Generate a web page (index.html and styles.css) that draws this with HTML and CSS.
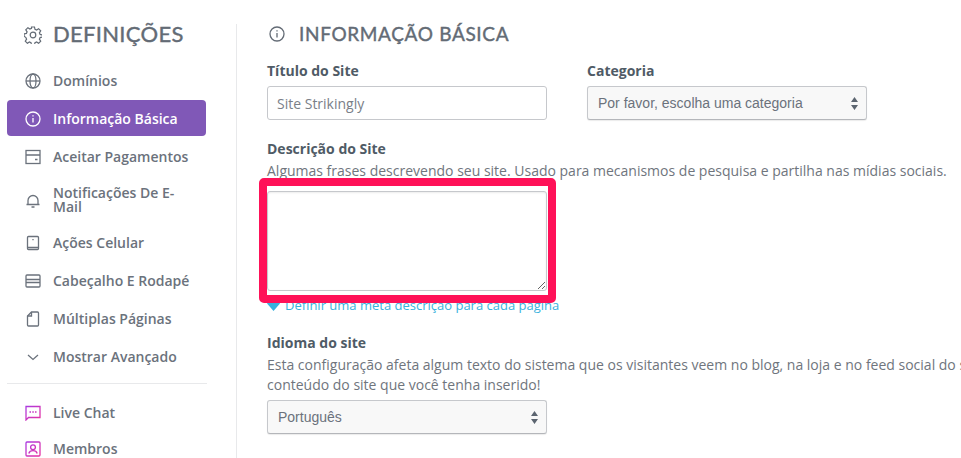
FILE: index.html
```html
<!DOCTYPE html>
<html lang="pt-br">
<head>
  <meta charset="UTF-8">
  <title>Definições</title>
  <link rel="stylesheet" href="styles.css">
</head>
<body>
  <div class="page">
    <aside class="sidebar">
      <h2 class="side-title">
        <svg class="icon title-icon" viewBox="0 0 18 18"><circle cx="9" cy="9" r="2.800"/><path d="M7.500 1h3l.5 2.300 1.600.7 2-1.300 2.100 2.100-1.300 2 .7 1.600 2.300.5v2.200l-2.300.5-.7 1.600 1.300 2-2.100 2.100-2-1.300-1.600.7-.5 2.300h-3l-.5-2.300-1.600-.7-2 1.300-2.100-2.100 1.300-2-.7-1.600L.1 10.100V7.900l2.300-.5.7-1.600-1.300-2 2.100-2.100 2 1.300 1.600-.7z"/></svg>
        DEFINIÇÕES
      </h2>
      <ul class="menu">
        <li class="menu-item">
          <svg class="icon" viewBox="0 0 16 16"><circle cx="8" cy="8" r="7"/><ellipse cx="8" cy="8" rx="3" ry="7"/><path d="M1 8h14"/></svg>
          <span>Domínios</span>
        </li>
        <li class="menu-item active">
          <svg class="icon" viewBox="0 0 16 16"><circle cx="8" cy="8" r="7"/><path d="M8 7v4.500M8 4.200v1.300"/></svg>
          <span>Informação Básica</span>
        </li>
        <li class="menu-item">
          <svg class="icon" viewBox="0 0 16 16"><rect x="1" y="1.500" width="14" height="13"/><path d="M1 6h14M10 10.500h2.500"/></svg>
          <span>Aceitar Pagamentos</span>
        </li>
        <li class="menu-item tall">
          <svg class="icon" viewBox="0 0 16 16"><path d="M1.500 12.500h13M3 12.500V8.500a5 5 0 0 1 10 0v4M6.500 15h3"/></svg>
          <span>Notificações De E-Mail</span>
        </li>
        <li class="menu-item">
          <svg class="icon" viewBox="0 0 16 16"><rect x="2.500" y="1.500" width="11" height="13" rx="1"/><path d="M8 4v1.300M2.500 12.500h11"/></svg>
          <span>Ações Celular</span>
        </li>
        <li class="menu-item">
          <svg class="icon" viewBox="0 0 16 16"><rect x="1" y="2" width="14" height="12" rx="1"/><path d="M1 6.500h14M1 9.500h14"/></svg>
          <span>Cabeçalho E Rodapé</span>
        </li>
        <li class="menu-item">
          <svg class="icon" viewBox="0 0 16 16"><path d="M6.500 1h6a1 1 0 0 1 1 1v12a1 1 0 0 1-1 1h-9a1 1 0 0 1-1-1V5z"/><path d="M6.500 1v4h-4"/></svg>
          <span>Múltiplas Páginas</span>
        </li>
        <li class="menu-item">
          <svg class="icon" viewBox="0 0 16 16"><path d="M3 6l5 4.500L13 6"/></svg>
          <span>Mostrar Avançado</span>
        </li>
      </ul>
      <hr class="side-line">
      <ul class="menu">
        <li class="menu-item extra">
          <svg class="icon" viewBox="0 0 16 16">
            <defs>
              <linearGradient id="chat-pink" gradientUnits="userSpaceOnUse" x1="0" y1="0" x2="16" y2="16">
                <stop offset="0" stop-color="#a63ce6"/>
                <stop offset="1" stop-color="#ec2f9c"/>
              </linearGradient>
            </defs>
            <path stroke="url(#chat-pink)" d="M1 15V1.500h14v11H3.500z"/>
            <path stroke="url(#chat-pink)" d="M4.500 7h1.500M7.300 7h1.500M10 7h1.500"/>
          </svg>
          <span>Live Chat</span>
        </li>
        <li class="menu-item extra">
          <svg class="icon" viewBox="0 0 16 16">
            <rect stroke="url(#chat-pink)" x="1" y="1" width="14" height="14" rx="1"/>
            <circle stroke="url(#chat-pink)" cx="8" cy="6.200" r="2.400"/>
            <path stroke="url(#chat-pink)" d="M3.800 12.500c.6-2 2.200-2.800 4.200-2.800s3.600.8 4.200 2.800"/>
          </svg>
          <span>Membros</span>
        </li>
      </ul>
    </aside>

    <main class="content">
      <h2 class="content-title">
        <svg class="icon" viewBox="0 0 16 16"><circle cx="8" cy="8" r="7"/><path d="M8 7v4.500M8 4.200v1.300"/></svg>
        INFORMAÇÃO BÁSICA
      </h2>

      <div class="form-row">
        <div class="field">
          <label class="label">Título do Site</label>
          <input class="input" type="text" value="Site Strikingly">
        </div>
        <div class="field">
          <label class="label">Categoria</label>
          <div class="select">
            <span>Por favor, escolha uma categoria</span>
            <svg class="arrows" viewBox="0 0 7 13"><path d="M3.500 0L7 5H0zM3.500 13L0 8h7z"/></svg>
          </div>
        </div>
      </div>

      <div class="block desc-block">
        <label class="label">Descrição do Site</label>
        <p class="help">Algumas frases descrevendo seu site. Usado para mecanismos de pesquisa e partilha nas mídias sociais.</p>
        <div class="area-wrap">
          <textarea class="textarea"></textarea>
          <div class="highlight"></div>
        </div>
        <a class="meta-link" href="#">
          <svg class="diamond" viewBox="0 0 12 10"><path d="M2.800 0h6.400L12 3.200 6 10 0 3.200z"/></svg>
          Definir uma meta descrição para cada página
        </a>
      </div>

      <div class="block lang-block">
        <label class="label">Idioma do site</label>
        <p class="help">Esta configuração afeta algum texto do sistema que os visitantes veem no blog, na loja e no feed social do site. Isso não afeta o<br>conteúdo do site que você tenha inserido!</p>
        <div class="select">
          <span>Português</span>
          <svg class="arrows" viewBox="0 0 7 13"><path d="M3.500 0L7 5H0zM3.500 13L0 8h7z"/></svg>
        </div>
      </div>
    </main>
  </div>
</body>
</html>
```
FILE: styles.css
```css
* {
  box-sizing: border-box;
  margin: 0;
  padding: 0;
}

html, body {
  height: 458px;
  overflow: hidden;
}

body {
  background-color: #fff;
  color: #636b75;
  font-family: "Open Sans", sans-serif;
}

.page {
  display: flex;
  align-items: flex-start;
  height: 458px;
  padding-top: 24px;
}

.icon {
  width: 16px;
  height: 16px;
  flex: none;
  fill: none;
  stroke: currentColor;
  stroke-width: 1.300;
}

.sidebar {
  width: 237px;
  height: 434px;
  flex: none;
  padding: 0 30px 0 7px;
  border-right: 1px solid #e8e9eb;
}

.side-title {
  display: flex;
  align-items: center;
  gap: 11px;
  height: 20px;
  margin-bottom: 18px;
  padding: 0 0 2px 17px;
  font-family: Lato, sans-serif;
  font-size: 22px;
  font-weight: 400;
  letter-spacing: 0.300px;
  -webkit-text-stroke: 0.400px #636b75;
  color: #636b75;
}

.title-icon {
  width: 18px;
  height: 18px;
  margin-top: 4px;
  stroke-width: 1.200;
}

.menu {
  list-style: none;
}

.menu-item {
  display: flex;
  align-items: center;
  gap: 12px;
  height: 38px;
  padding: 0 4px 0 18px;
  border-radius: 4px;
  font-size: 14px;
  font-weight: 600;
  line-height: 14px;
  color: #6b727c;
}

.menu-item.active {
  height: 36px;
  margin: 0 0 2px;
  padding-top: 2px;
  background-color: #8058b7;
  color: #fff;
}

.menu-item.tall {
  height: 48px;
  padding-right: 20px;
}

.menu-item.extra {
  height: 36px;
}

.side-line {
  height: 1px;
  margin: 7px -1px 11px 0;
  border: none;
  background-color: #e8e9eb;
}

.content {
  flex: none;
  width: 724px;
  padding-left: 30px;
}

.content-title {
  display: flex;
  align-items: center;
  gap: 14px;
  height: 20px;
  margin-bottom: 18px;
  padding: 0 0 2px 2px;
  font-family: Lato, sans-serif;
  font-size: 19px;
  font-weight: 400;
  letter-spacing: 0.650px;
  -webkit-text-stroke: 0.400px #636b75;
  color: #636b75;
}

.content-title .icon {
  margin-top: 2px;
}

.form-row {
  display: flex;
  gap: 40px;
}

.field {
  width: 280px;
}

.label {
  display: block;
  height: 20px;
  margin-bottom: 4px;
  font-size: 14px;
  font-weight: 700;
  line-height: 18px;
  color: #4f5b66;
}

.input {
  display: block;
  width: 280px;
  height: 34px;
  padding: 0 9px;
  border: 1px solid #c6c8cc;
  border-radius: 3px;
  font-family: "Open Sans", sans-serif;
  font-size: 14px;
  color: #7a8088;
}

.select {
  display: flex;
  align-items: center;
  justify-content: space-between;
  width: 280px;
  height: 34px;
  padding: 0 8px 0 10px;
  border: 1px solid #c6c8cc;
  border-bottom-color: #b4b6ba;
  border-radius: 3px;
  background-color: #f8f8f8;
  box-shadow: 0 1px 1px rgba(0, 0, 0, 0.080);
  font-family: "Liberation Sans", sans-serif;
  font-size: 14px;
  color: #6b727c;
}

.arrows {
  width: 7px;
  height: 13px;
  fill: #5c6570;
}

.block {
  display: block;
}

.desc-block {
  margin-top: 20px;
}

.desc-block .label,
.lang-block .label {
  margin-bottom: 0;
}

.help {
  font-size: 14px;
  line-height: 21px;
  color: #6f757d;
  white-space: nowrap;
}

.area-wrap {
  position: relative;
  width: 280px;
  height: 100px;
  margin-top: 10px;
}

.textarea {
  display: block;
  width: 280px;
  height: 100px;
  border: 1px solid #c6c8cc;
  border-radius: 3px;
  box-shadow: inset 0 1px 2px rgba(0, 0, 0, 0.080);
  resize: both;
}

.highlight {
  position: absolute;
  top: -13px;
  left: -8px;
  width: 297px;
  height: 125px;
  border: 8px solid #ff1158;
  border-radius: 5px;
  pointer-events: none;
}

.meta-link {
  display: flex;
  align-items: center;
  gap: 5px;
  height: 18px;
  margin-top: 5px;
  font-size: 13px;
  line-height: 18px;
  color: #38b2dd;
  text-decoration: none;
}

.diamond {
  width: 13px;
  height: 11px;
  margin-top: 1px;
  fill: #38b2dd;
}

.lang-block {
  margin-top: 20px;
}

.lang-block .help {
  margin-top: 1px;
  line-height: 20px;
  overflow: hidden;
}

.lang-block .select {
  margin-top: 5px;
}
```
